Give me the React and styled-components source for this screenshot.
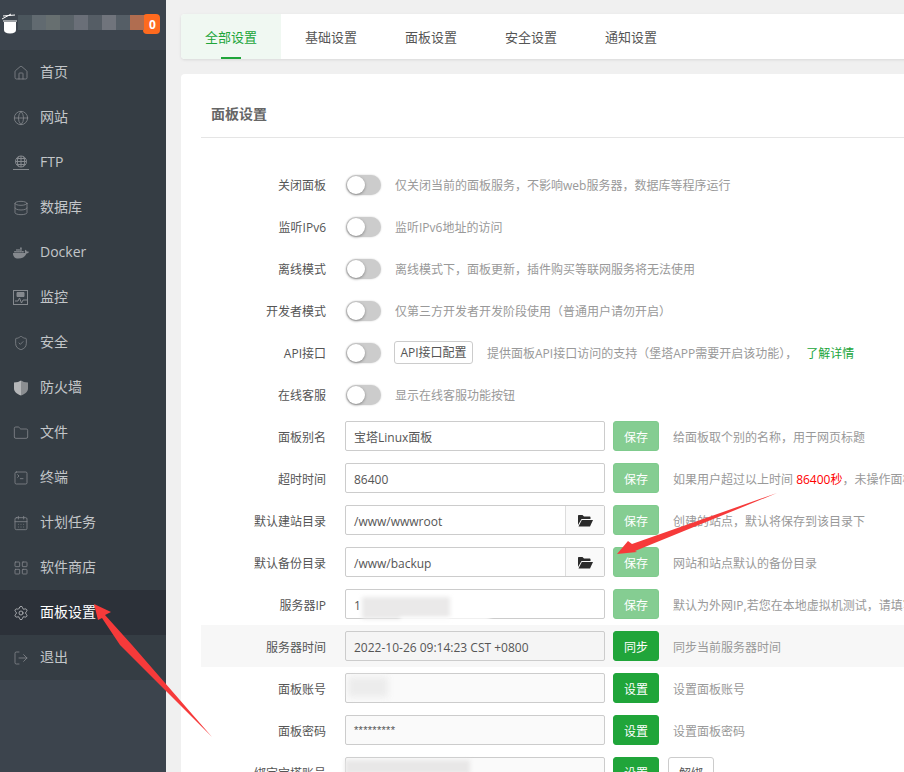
import React from 'react';
import styled, { createGlobalStyle } from 'styled-components';
import { Home, Globe, Database, ShieldCheck, Folder, SquareTerminal, CalendarDays, LayoutGrid, Settings, LogOut } from 'lucide-react';
import { FaDocker } from 'react-icons/fa';

const Global = createGlobalStyle`
  html, body { margin: 0; padding: 0; width: 904px; height: 772px; overflow: hidden; background: #f0f0f0; }
  * { box-sizing: border-box; }
  body { font-family: "Open Sans", "Noto Sans CJK SC", sans-serif; font-size: 12px; color: #555; }
`;
const Page = styled.div`position: relative; display: flex; width: 904px; height: 772px; overflow: hidden;`;
const Sidebar = styled.aside`width: 166px; flex: none; background: #3c444d; display: flex; flex-direction: column;`;
const Brand = styled.div`position: relative; height: 50px;`;
const Logo = styled.svg`position: absolute; left: 1px; top: 13px; width: 18px; height: 21px;`;
const Mosaic = styled.div`position: absolute; left: 18px; top: 15px; display: flex; height: 15px;`;
const Tile = styled.span`width: 14px; height: 100%; background: ${p => p.$c};`;
const Badge = styled.span`position: absolute; left: 143px; top: 14px; width: 17px; height: 20px; border-radius: 4px; background: #ff6a1e; color: #fff; font: 700 12px "Open Sans", sans-serif; display: flex; align-items: center; justify-content: center; padding-left: 2px;`;
const Menu = styled.nav`background: #353d44; display: flex; flex-direction: column;`;
const MenuItem = styled.div`height: 45px; display: flex; align-items: center; gap: 11px; padding-left: 13px; font-size: 14px; color: ${p => p.$active ? '#fff' : '#c3c6c9'}; background: ${p => p.$active ? '#2c3139' : 'transparent'};
  svg { flex: none; width: 16px; height: 16px; color: ${p => p.$active ? '#c0c2c5' : '#85898e'}; }
  span { padding-bottom: 3px; }`;
const Main = styled.main`flex: 1; min-width: 0; padding: 14px 0 0 15px; display: flex; flex-direction: column; gap: 15px;`;
const Tabs = styled.div`height: 45px; width: 800px; flex: none; display: flex; background: #fff; border-radius: 4px 0 0 4px; box-shadow: 0 1px 3px rgba(0,0,0,.1); overflow: hidden;`;
const Tab = styled.div`position: relative; width: 100px; display: flex; align-items: center; justify-content: center; font-size: 13px; color: ${p => p.$active ? '#20a53a' : '#555'}; background: ${p => p.$active ? '#f0f8f2' : 'transparent'};
  ${p => p.$active && `&::after { content: ""; position: absolute; left: 40px; bottom: 0; width: 20px; height: 2px; background: #20a53a; }`}`;
const Card = styled.section`width: 800px; flex: 1; background: #fff; border-radius: 4px 0 0 0; padding-left: 20px;`;
const CardTitle = styled.h2`margin: 0 0 25px; height: 64px; padding: 30px 0 0 10px; border-bottom: 1px solid #e5e5e5; font-size: 14px; line-height: 19px; font-weight: 700; color: #666;`;
const Row = styled.div`height: 42px; display: flex; align-items: center; background: ${p => p.$shade ? '#f7f7f7' : 'transparent'};`;
const Label = styled.label`width: 125px; flex: none; margin-right: 19px; padding-top: 2px; text-align: right; color: #555;`;
const Toggle = styled.span`position: relative; top: 1px; width: 35px; height: 20px; flex: none; margin-left: 1px; border-radius: 10px; background: #ccc; box-shadow: 0 0 2px rgba(0,0,0,.2);
  &::after { content: ""; position: absolute; left: 1px; top: 1px; width: 18px; height: 18px; border-radius: 50%; background: #fff; box-shadow: 0 1px 3px rgba(0,0,0,.35); }`;
const Desc = styled.span`margin-left: ${p => p.$gap || 14}px; padding-top: 2px; color: #999; white-space: nowrap;`;
const Red = styled.span`color: #f00;`;
const More = styled.span`margin-left: 9px; color: #20a53a;`;
const ConfigButton = styled.button`margin-left: 13px; width: 79px; height: 23px; padding: 0; border: 1px solid #ccc; border-radius: 3px; background: #fff; font: inherit; color: #555;`;
const InputGroup = styled.div`width: 260px; height: 30px; flex: none; display: flex; border: 1px solid #ccc; border-radius: 2px; background: ${p => p.$bg || '#fff'}; color: #555; overflow: hidden;`;
const Value = styled.span`flex: 1; padding: 2px 0 0 8px; line-height: 28px;`;
const Secret = styled(Value)`padding-top: 0; font-family: "Liberation Sans", sans-serif; font-size: 11px; letter-spacing: .3px;`;
const Browse = styled.span`width: 39px; flex: none; border-left: 1px solid #ddd; background: #fafafa; display: flex; align-items: center; justify-content: center; color: #2b2b2b; svg { width: 15px; height: 13px; }`;
const Action = styled.button`margin-left: 8px; width: 46px; height: 30px; flex: none; padding: 1px 0 0; border: 1px solid ${p => p.$pale ? '#7fcb8d' : '#20a53a'}; border-radius: 3px; background: ${p => p.$pale ? '#85cd92' : '#20a53a'}; color: #fff; font: inherit;`;
const Unbind = styled.button`margin-left: 9px; width: 46px; height: 30px; flex: none; padding: 1px 0 0; border: 1px solid #ccc; border-radius: 3px; background: #fff; color: #555; font: inherit;`;
const Smudge = styled.div`position: absolute; left: ${p => p.$x}px; top: ${p => p.$y}px; width: ${p => p.$w}px; height: ${p => p.$h}px; background: ${p => p.$c}; filter: blur(${p => p.$b ?? 2}px);`;
const Arrows = styled.svg`position: absolute; inset: 0; width: 904px; height: 772px; pointer-events: none;`;

const Ftp = () => <svg viewBox="0 0 16 16" fill="none" stroke="currentColor" strokeWidth="1"><circle cx="8" cy="6.5" r="5.5"/><path d="M2.5 6.5h11M3.5 3.5h9M3.5 9.500h9M8 1v11M5.500 1.500c-1.500 3-1.500 7 0 10M10.500 1.500c1.500 3 1.500 7 0 10M0 14.500h16"/></svg>;
const Monitor = () => <svg viewBox="0 0 16 16" fill="none" stroke="currentColor" strokeWidth="1"><rect x=".5" y=".5" width="14" height="14"/><path d="M4 2.500h7v4H4z" fill="currentColor"/><path d="M2 11h3l1.500-3 2 5 1.500-3h4"/></svg>;
const Firewall = () => <svg viewBox="0 0 16 16" fill="currentColor"><path d="M1 2.500 5 2l3-1.500V15.500C4 14 1 12 1 8.500z" fill="#b4b6b8"/><path d="M8 .5 11 2l4 .5v6c0 3.500-3 5.500-7 7z" fill="#8b8e91"/></svg>;
const FolderOpenSolid = () => <svg viewBox="0 0 15 13" fill="currentColor"><path d="M0 2c0-.6.400-1 1-1h3.500l1.500 1.500h5.500c.6 0 1 .4 1 1V5H3.500L0 11z"/><path d="M3.800 6H15l-3 6.500H.5z"/></svg>;

const menu = [
  ['首页', <Home strokeWidth={1.2} />], ['网站', <Globe strokeWidth={1.2} />], ['FTP', <Ftp />], ['数据库', <Database strokeWidth={1.2} />],
  ['Docker', <FaDocker />], ['监控', <Monitor />], ['安全', <ShieldCheck strokeWidth={1.2} />], ['防火墙', <Firewall />],
  ['文件', <Folder strokeWidth={1.2} />], ['终端', <SquareTerminal strokeWidth={1.2} />], ['计划任务', <CalendarDays strokeWidth={1.2} />],
  ['软件商店', <LayoutGrid strokeWidth={1.2} />], ['面板设置', <Settings strokeWidth={1.2} />, true], ['退出', <LogOut strokeWidth={1.2} />],
];
const tiles = ['#4b565d', '#616a70', '#676f70', '#596268', '#6a6f78', '#555d65', '#70747c', '#555e66', '#b06d50'];
const tabs = ['全部设置', '基础设置', '面板设置', '安全设置', '通知设置'];
const toggles = [
  ['关闭面板', '仅关闭当前的面板服务，不影响web服务器，数据库等程序运行'],
  ['监听IPv6', '监听IPv6地址的访问'],
  ['离线模式', '离线模式下，面板更新，插件购买等联网服务将无法使用'],
  ['开发者模式', '仅第三方开发者开发阶段使用（普通用户请勿开启）'],
];
const SaveRow = ({ label, value, browse, children }) => (
  <Row>
    <Label>{label}</Label>
    <InputGroup><Value>{value}</Value>{browse && <Browse><FolderOpenSolid /></Browse>}</InputGroup>
    <Action $pale>保存</Action>
    <Desc>{children}</Desc>
  </Row>
);

export default function App() {
  return (
    <Page>
      <Global />
      <Sidebar>
        <Brand>
          <Badge>0</Badge>
          <Mosaic>{tiles.map((c, i) => <Tile key={i} $c={c} />)}</Mosaic>
          <Logo viewBox="0 0 18 21"><path d="M1 6 10 1M2 3l12-1M2 8h14" stroke="#fff" strokeWidth="1" fill="none"/><path d="M3 9h12v8c0 2-2 3.500-6 3.500s-6-1.500-6-3.500z" fill="#fff"/></Logo>
        </Brand>
        <Menu>
          {menu.map(([t, icon, active]) => <MenuItem key={t} $active={active}>{icon}<span>{t}</span></MenuItem>)}
        </Menu>
      </Sidebar>
      <Main>
        <Tabs>{tabs.map((t, i) => <Tab key={t} $active={i === 0}>{t}</Tab>)}</Tabs>
        <Card>
          <CardTitle>面板设置</CardTitle>
          {toggles.map(([l, d]) => <Row key={l}><Label>{l}</Label><Toggle /><Desc>{d}</Desc></Row>)}
          <Row>
            <Label>API接口</Label><Toggle /><ConfigButton>API接口配置</ConfigButton>
            <Desc>提供面板API接口访问的支持（堡塔APP需要开启该功能），<More>了解详情</More></Desc>
          </Row>
          <Row><Label>在线客服</Label><Toggle /><Desc>显示在线客服功能按钮</Desc></Row>
          <SaveRow label="面板别名" value="宝塔Linux面板">给面板取个别的名称，用于网页标题</SaveRow>
          <SaveRow label="超时时间" value="86400">如果用户超过以上时间 <Red>86400秒</Red>，未操作面板，将自动退出</SaveRow>
          <SaveRow label="默认建站目录" value="/www/wwwroot" browse>创建的站点，默认将保存到该目录下</SaveRow>
          <SaveRow label="默认备份目录" value="/www/backup" browse>网站和站点默认的备份目录</SaveRow>
          <SaveRow label="服务器IP" value="1">默认为外网IP,若您在本地虚拟机测试，请填写虚拟机IP</SaveRow>
          <Row $shade><Label>服务器时间</Label><InputGroup $bg="#f5f5f5"><Value>2022-10-26 09:14:23 CST +0800</Value></InputGroup><Action>同步</Action><Desc>同步当前服务器时间</Desc></Row>
          <Row><Label>面板账号</Label><InputGroup $bg="#fafafa"><Value /></InputGroup><Action>设置</Action><Desc>设置面板账号</Desc></Row>
          <Row><Label>面板密码</Label><InputGroup $bg="#fafafa"><Secret>*********</Secret></InputGroup><Action>设置</Action><Desc>设置面板密码</Desc></Row>
          <Row><Label>绑定宝塔账号</Label><InputGroup $bg="#fafafa"><Value /></InputGroup><Action>设置</Action><Unbind>解绑</Unbind></Row>
        </Card>
      </Main>
      <Smudge $x={362} $y={597} $w={88} $h={22} $c="#eae9e9" />
      <Smudge $x={400} $y={617} $w={90} $h={5} $c="#fff" />
      <Smudge $x={348} $y={677} $w={40} $h={20} $c="#ececec" $b={3} />
      <Smudge $x={345} $y={760} $w={125} $h={14} $c="#e8e7e7" />
      <Arrows viewBox="0 0 904 772">
        <polygon fill="#f63a3a" points="94,604 111,612 105,615 132,645 212,737 120,645 102,618 98,620" />
        <polygon fill="#f63a3a" points="617,554 628,541 632,544 777,493 635,551 637,552" />
      </Arrows>
    </Page>
  );
}
